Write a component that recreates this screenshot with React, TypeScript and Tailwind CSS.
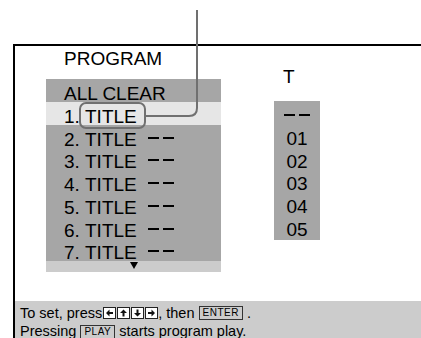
import React from 'react';

const rows = ['1.', '2.', '3.', '4.', '5.', '6.', '7.'];
const tracks = ['01', '02', '03', '04', '05'];

function Dashes({ className = '' }: { className?: string }) {
  return (
    <span className={`inline-flex gap-[4px] ${className}`}>
      <span className="block w-[11px] h-[2px] bg-black" />
      <span className="block w-[11px] h-[2px] bg-black" />
    </span>
  );
}

function ArrowKey({ rot }: { rot: number }) {
  return (
    <svg width="13" height="12" viewBox="0 0 13 12" className="block">
      <rect x="0.5" y="0.5" width="12" height="11" fill="#fff" stroke="#222" />
      <path d="M3 5 H6.5 V2.5 L10 6 L6.5 9.5 V7 H3 Z" fill="#111" transform={`rotate(${rot} 6.5 6)`} />
    </svg>
  );
}

function KeyLabel({ children }: { children: React.ReactNode }) {
  return (
    <span className="inline-block border border-[#333] text-[10px] leading-[10px] px-[3px] py-[1px] tracking-[0.5px] align-[1px]">
      {children}
    </span>
  );
}

export default function App() {
  return (
    <div className="relative w-[421px] h-[338px] bg-white overflow-hidden text-black font-['Liberation_Sans',Arial,sans-serif]">
      <div className="flex flex-col h-full pt-[44px] pl-[13px]">
        {/* ── Screen panel ── */}
        <div className="flex flex-col flex-1 border-l-2 border-t-2 border-black">
          <div className="flex">
            {/* Program list */}
            <div className="pl-[31px] w-[206px]">
              <div className="mt-[2px] pl-[18px] text-[19px] leading-[22px]">PROGRAM</div>
              <div className="mt-[9px] w-[175px] bg-[#a6a6a6] text-[19px]">
                <div className="relative h-[22.75px] pl-[18px] pt-[4px] leading-[22px]">ALL CLEAR</div>
                {rows.map((n, i) => (
                  <div
                    key={n}
                    className={`relative h-[22.75px] pl-[18px] pt-[4px] leading-[22px] whitespace-nowrap flex items-start ${
                      i === 0 ? 'bg-[#e6e6e6]' : 'bg-[#a6a6a6]'
                    }`}
                  >
                    <span className="w-[21px]">{n}</span>
                    <span>TITLE</span>
                    {i > 0 && <Dashes className="ml-[11px] mt-[8px]" />}
                  </div>
                ))}
                <div className="relative h-[11px] bg-[#cccccc] flex justify-center">
                  <svg width="8" height="7" viewBox="0 0 8 7" className="mt-[1px]">
                    <path d="M0 0 H8 L4 7 Z" fill="#000" />
                  </svg>
                </div>
              </div>
            </div>

            {/* Track column */}
            <div className="ml-[53px] mt-[20px]">
              <div className="pl-[9px] text-[19px] leading-[22px]">T</div>
              <div className="mt-[13px] w-[46px] h-[139px] bg-[#a6a6a6] text-[19px]">
                <div className="h-[22.75px] flex justify-center pt-[13px]">
                  <Dashes />
                </div>
                {tracks.map((t) => (
                  <div key={t} className="h-[22.75px] pt-[4px] leading-[22px] text-center">
                    {t}
                  </div>
                ))}
              </div>
            </div>
          </div>

          {/* ── Help bar ── */}
          <div className="mt-auto h-[37px] bg-[#cccccc] pl-[5px] pt-[3px] text-[14.5px] leading-[18px] whitespace-nowrap overflow-hidden">
            <div className="flex items-center">
              <span>To set, press</span>
              <span className="flex gap-[1px] ml-[1px]">
                <ArrowKey rot={180} />
                <ArrowKey rot={-90} />
                <ArrowKey rot={90} />
                <ArrowKey rot={0} />
              </span>
              <span>, then&nbsp;</span>
              <KeyLabel>ENTER</KeyLabel>
              <span>&nbsp;.</span>
            </div>
            <div>
              Pressing <KeyLabel>PLAY</KeyLabel> starts program play.
            </div>
          </div>
        </div>
      </div>

      {/* callout line + highlight */}
      <svg className="absolute inset-0 pointer-events-none" width="421" height="338" viewBox="0 0 421 338">
        <path d="M197 10 V108 Q197 116 189 116 H145" fill="none" stroke="#707070" strokeWidth="2" />
        <rect x="80" y="103" width="65" height="25" rx="6" fill="none" stroke="#707070" strokeWidth="2" />
      </svg>
    </div>
  );
}
